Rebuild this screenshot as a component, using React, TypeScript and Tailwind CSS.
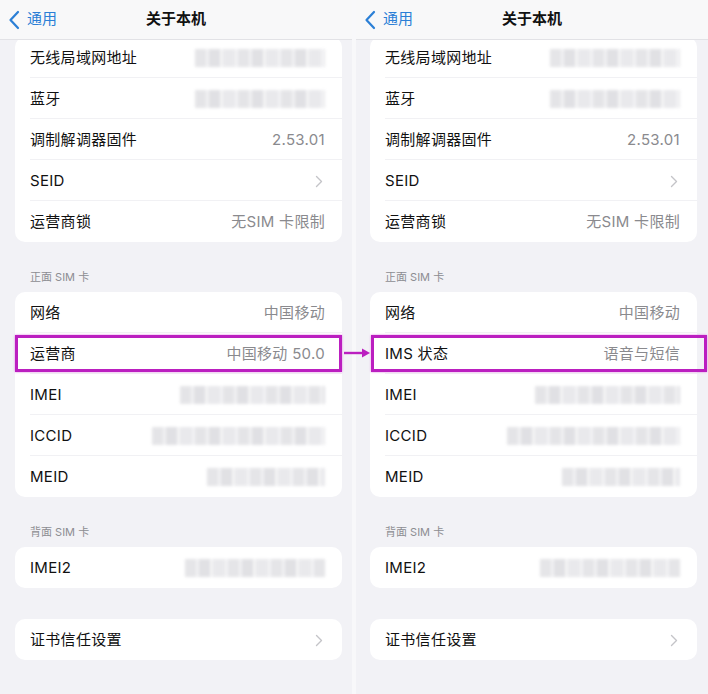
import React from "react";

const FONT = "font-['Inter','Noto_Sans_CJK_SC',sans-serif]";

function Blur({ w }: { w: string }) {
  return (
    <div
      className={`${w} h-[18px] blur-[1.5px] opacity-70 bg-[repeating-linear-gradient(90deg,#dadade_0_11px,#ececef_11px_14px,#d4d4d9_14px_25px,#f0f0f2_25px_28px,#e0e0e4_28px_40px,#eeeef1_40px_43px)]`}
    />
  );
}

function Chevron() {
  return (
    <svg width="8" height="13" viewBox="0 0 8 13" fill="none" className="mr-[2px]">
      <path d="M1.5 1.5L6.5 6.5L1.5 11.5" stroke="#c4c4c8" strokeWidth="1.4" strokeLinecap="round" strokeLinejoin="round" />
    </svg>
  );
}

function Row({
  label,
  children,
  last,
}: {
  label: string;
  children?: React.ReactNode;
  last?: boolean;
}) {
  return (
    <div className="relative flex h-[41px] items-center justify-between pl-[15px] pr-[17px] pt-[1px]">
      <span className="text-[15px] text-[#111] tracking-[0.3px]">{label}</span>
      <div className="flex items-center text-[15px] text-[#8a8a8e] tracking-[0.3px]">{children}</div>
      {!last && <div className="absolute bottom-0 left-[15px] right-0 h-px bg-[#f1f1f4]" />}
    </div>
  );
}

function Card({ children }: { children: React.ReactNode }) {
  return <div className="rounded-[10px] bg-white overflow-hidden">{children}</div>;
}

function Section({ title }: { title: string }) {
  return (
    <div className="pl-[15px] pt-[28px] pb-[7px] text-[11px] leading-[15px] text-[#8d8d92]">{title}</div>
  );
}

function Highlight({ className }: { className: string }) {
  return (
    <div
      className={`absolute border-[3px] border-[#bb1fc0] shadow-[0_0_2px_#e07ae4] pointer-events-none ${className}`}
    />
  );
}

function Panel({ right }: { right?: boolean }) {
  return (
    <div className="relative flex h-full w-[352px] flex-col overflow-hidden bg-[#f2f2f6]">
      <div className="relative z-10 flex h-10 shrink-0 items-center border-b border-[#e2e2e6] bg-[#f8f8f9] px-[8px]">
        <svg width="12" height="20" viewBox="0 0 12 20" fill="none">
          <path d="M10 2L2.5 10L10 18" stroke="#2b7fd6" strokeWidth="2.2" strokeLinecap="round" strokeLinejoin="round" />
        </svg>
        <span className="ml-[7px] text-[15px] text-[#2b7fd6]">通用</span>
        <span className="absolute left-1/2 -translate-x-1/2 text-[15px] font-bold text-[#111]">关于本机</span>
      </div>

      <div className={right ? "ml-[14px] mr-[11px]" : "ml-[15px] mr-[10px]"}>
        <div className="-mt-[3px]">
          <Card>
            <Row label="无线局域网地址">
              <Blur w="w-[130px]" />
            </Row>
            <Row label="蓝牙">
              <Blur w="w-[130px]" />
            </Row>
            <Row label="调制解调器固件">2.53.01</Row>
            <Row label="SEID">
              <Chevron />
            </Row>
            <Row label="运营商锁" last>
              无SIM 卡限制
            </Row>
          </Card>
        </div>

        <Section title="正面 SIM 卡" />
        <Card>
          <Row label="网络">中国移动</Row>
          {right ? <Row label="IMS 状态">语音与短信</Row> : <Row label="运营商">中国移动 50.0</Row>}
          <Row label="IMEI">
            <Blur w="w-[145px]" />
          </Row>
          <Row label="ICCID">
            <Blur w="w-[173px]" />
          </Row>
          <Row label="MEID" last>
            <Blur w="w-[118px]" />
          </Row>
        </Card>

        <Section title="背面 SIM 卡" />
        <Card>
          <Row label="IMEI2" last>
            <Blur w="w-[140px]" />
          </Row>
        </Card>

        <div className="h-[31px]" />
        <Card>
          <Row label="证书信任设置" last>
            <Chevron />
          </Row>
        </Card>
      </div>
    </div>
  );
}

export default function App() {
  return (
    <div className={`relative flex h-[694px] w-[708px] bg-[#f8f8fa] ${FONT}`}>
      <Panel />
      <div className="w-[4px]" />
      <Panel right />
      {/* highlight boxes and arrow laid over the two screenshots */}
      <Highlight className="left-[15px] w-[327px] top-[335px] h-[37px]" />
      <Highlight className="left-[371px] w-[336px] top-[335px] h-[37px]" />
      <svg className="absolute left-[342px] top-[347px]" width="30" height="12" viewBox="0 0 30 12">
        <path d="M2 6H22" stroke="#bb1fc0" strokeWidth="2.4" />
        <path d="M20 1.5L28 6L20 10.5Z" fill="#bb1fc0" />
      </svg>
    </div>
  );
}
